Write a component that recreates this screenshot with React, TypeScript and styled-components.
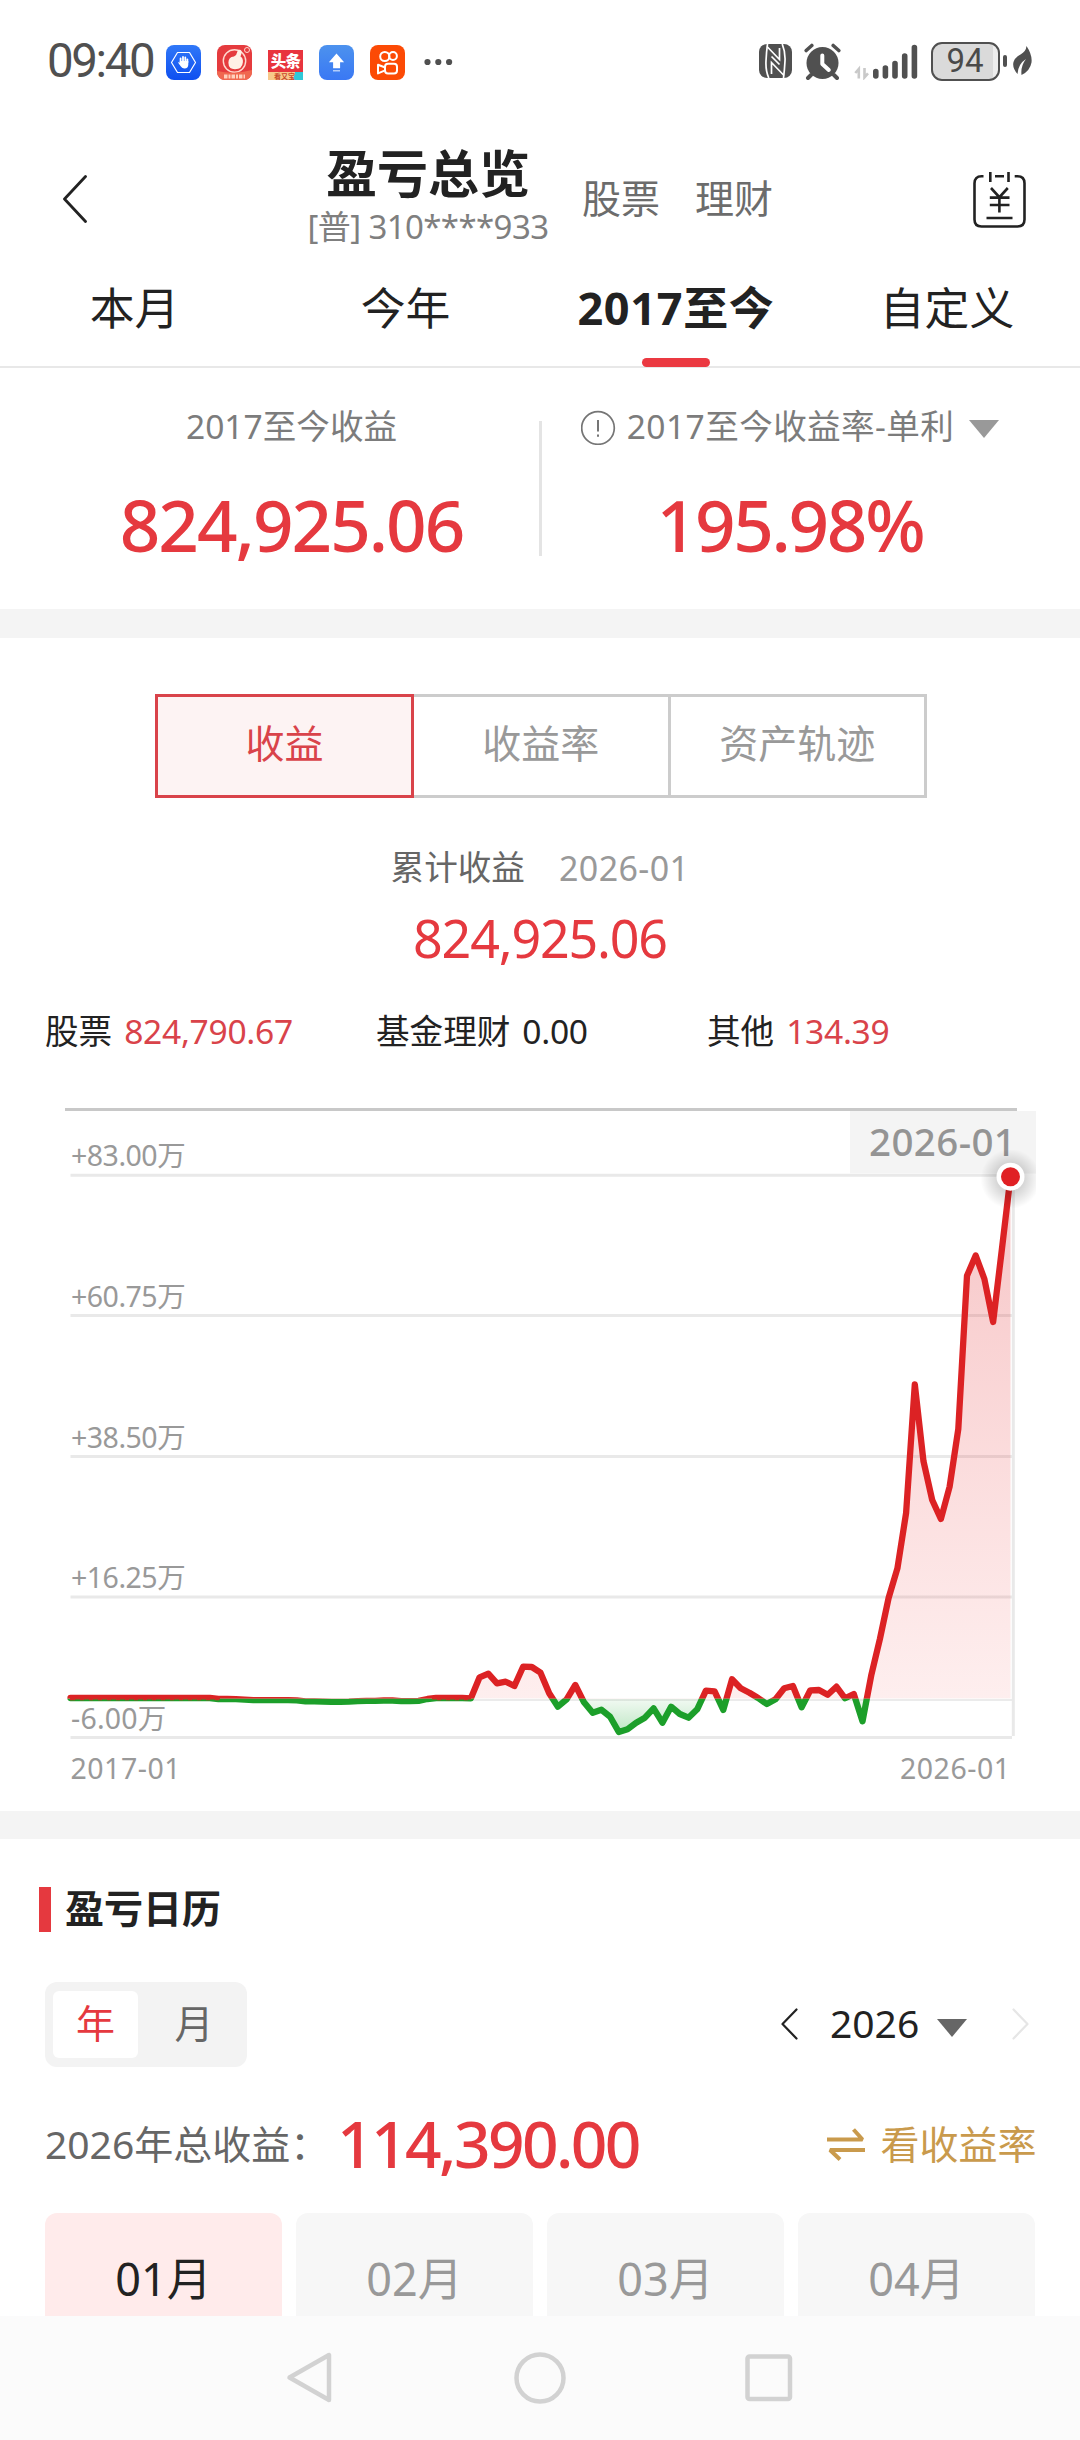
import React from "react";
import styled, { createGlobalStyle } from "styled-components";

const RED = "#e5393f";
const GREY = "#999999";

const Global = createGlobalStyle`
  * { box-sizing: border-box; }
  body { margin: 0; background: #ffffff; }
`;

const Screen = styled.div`
  width: 1080px;
  height: 2440px;
  display: flex;
  flex-direction: column;
  overflow: hidden;
  background: #ffffff;
  color: #222222;
  font-family: "Noto Sans", "Noto Sans CJK SC", sans-serif;
  svg { display: block; flex: none; }
`;

const Label = styled.span<{
  $size?: number;
  $color?: string;
  $weight?: number;
  $track?: number;
}>`
  font-size: ${(p) => p.$size ?? 33.6}px;
  line-height: 1.3;
  color: ${(p) => p.$color ?? "#222222"};
  font-weight: ${(p) => p.$weight ?? 400};
  letter-spacing: ${(p) => p.$track ?? 0}px;
  white-space: nowrap;
`;

/* ---------- status bar ---------- */

const StatusBar = styled.header`
  height: 122px;
  flex: none;
  display: flex;
  align-items: center;
  justify-content: space-between;
  padding: 0 48px 0 47px;
`;

const StatusGroup = styled.div`
  display: flex;
  align-items: center;
`;

const Clock = styled.span`
  width: 119px;
  font-family: Roboto, sans-serif;
  font-size: 47.5px;
  line-height: 56px;
  letter-spacing: -2.4px;
  color: #505050;
`;

const AppIcons = styled.div`
  display: flex;
  gap: 16px;
  padding-top: 2px;
`;

const MoreApps = styled.div`
  padding: 2px 0 0 19px;
`;

const Tile = styled.div<{ $bg: string }>`
  width: 35px;
  height: 35px;
  border-radius: 8px;
  background: ${(p) => p.$bg};
  overflow: hidden;
`;

const NewsTile = styled.div`
  width: 35px;
  height: 30px;
  margin-top: 5px;
  display: flex;
  flex-direction: column;
  overflow: hidden;
  background: #e8343e;
`;

const NewsName = styled.span`
  height: 22px;
  font-family: "Noto Sans CJK SC", sans-serif;
  font-size: 15.5px;
  line-height: 21px;
  font-weight: 900;
  letter-spacing: -0.8px;
  text-align: center;
  color: #ffffff;
`;

const NewsStrip = styled.span`
  height: 8px;
  font-family: "Noto Sans CJK SC", sans-serif;
  font-size: 7px;
  line-height: 8px;
  font-weight: 700;
  padding-left: 6px;
  color: #c8482c;
  background: linear-gradient(110deg, #f8c88a 0 72%, #2fc8d8 73%);
`;

const AlarmSlot = styled.div`
  padding: 0 13px 0 12px;
`;

const Battery = styled.div`
  width: 69px;
  height: 39px;
  margin-left: 13px;
  border: 2.5px solid #505050;
  border-radius: 11px;
  background: linear-gradient(90deg, #dadada 0 92%, #ededed 92%);
  display: flex;
  align-items: center;
  justify-content: center;
`;

const BatteryText = styled.span`
  font-family: Roboto, sans-serif;
  font-size: 33px;
  line-height: 34px;
  color: #4a4a4a;
`;

const BatteryTip = styled.div`
  width: 4px;
  height: 12px;
  margin: 0 6px 0 3.5px;
  border-radius: 2px;
  background: #505050;
`;

/* ---------- title bar and tabs ---------- */

const TitleBar = styled.div`
  height: 145px;
  flex: none;
  display: grid;
  grid-template-columns: 308px 240px 1fr 52px;
  padding: 0 55px 0 0;
`;

const BackButton = styled.div`
  padding: 53px 0 0 63px;
`;

const TitleStack = styled.div`
  display: flex;
  flex-direction: column;
  align-items: center;
  padding-top: 18px;
`;

const TitleText = styled.h1`
  margin: 0;
  font-size: 51px;
  line-height: 67px;
  font-weight: 700;
  color: #222222;
`;

const Account = styled.span`
  font-size: 33px;
  line-height: 40px;
  letter-spacing: -0.6px;
  color: #7f7f7f;
  white-space: nowrap;
`;

const TitleLinks = styled.nav`
  display: flex;
  gap: 35px;
  padding: 51px 0 0 34px;
`;

const CalendarButton = styled.div`
  padding-top: 49px;
`;

const Tabs = styled.nav`
  height: 101px;
  flex: none;
  display: grid;
  grid-template-columns: 269px 273px 268px 274px;
  border-bottom: 2px solid #e8e8e8;
`;

const Tab = styled.div`
  display: flex;
  flex-direction: column;
  align-items: center;
  justify-content: space-between;
  padding-top: 12px;
  height: 100px;
`;

const TabMark = styled.i`
  width: 68px;
  height: 9px;
  border-radius: 5px;
  background: #eb3941;
`;

/* ---------- summary ---------- */

const Summary = styled.section`
  height: 241px;
  flex: none;
  display: grid;
  grid-template-columns: 539px 3px 1fr;
  padding-top: 3px;
`;

const SummaryCell = styled.div<{ $left?: number; $right?: number }>`
  display: flex;
  flex-direction: column;
  align-items: center;
  padding: 34px ${(p) => p.$right ?? 0}px 0 ${(p) => p.$left ?? 0}px;
`;

const SummaryHead = styled.div`
  height: 44px;
  display: flex;
  align-items: center;
`;

const SummaryValue = styled(Label)`
  margin-top: 30px;
  line-height: 92px;
`;

const Divider = styled.div`
  height: 135px;
  margin-top: 50px;
  background: #e4e4e4;
`;

const Band = styled.div<{ $h: number }>`
  height: ${(p) => p.$h}px;
  flex: none;
  background: #f4f4f4;
`;

const Caret = styled.i<{ $color: string }>`
  display: block;
  width: 0;
  height: 0;
  border-left: 15.5px solid transparent;
  border-right: 15.5px solid transparent;
  border-top: 18.5px solid ${(p) => p.$color};
`;

const RateCaret = styled(Caret)`
  margin: 4px 0 0 15px;
`;

/* ---------- profit chart ---------- */

const ChartSection = styled.section`
  height: 1173px;
  flex: none;
  display: flex;
  flex-direction: column;
`;

const Segments = styled.div`
  display: flex;
  margin: 56px 0 0 155px;
  width: 772px;
`;

const Segment = styled.div<{ $active?: boolean }>`
  flex: ${(p) => (p.$active ? "0 0 259px" : "1 1 0")};
  height: 104px;
  display: flex;
  align-items: center;
  justify-content: center;
  padding-bottom: 5px;
  border: 3px solid ${(p) => (p.$active ? "#d9434a" : "#cccccc")};
  border-left-width: ${(p) => (p.$active ? 3 : 0)}px;
  background: ${(p) => (p.$active ? "#fdf3f3" : "#ffffff")};
`;

const Caption = styled.div`
  display: flex;
  justify-content: center;
  gap: 34px;
  height: 44px;
  margin-top: 48px;
`;

const Total = styled(Label)`
  align-self: center;
  line-height: 70px;
  margin-top: 13px;
`;

const Breakdown = styled.div`
  display: grid;
  grid-template-columns: 331px 331px 1fr;
  padding-left: 45px;
  margin-top: 37px;
  height: 44px;
`;

const BreakdownItem = styled.div`
  display: flex;
  gap: 12px;
`;

const ChartBox = styled.div`
  margin-top: 46px;
`;

/* ---------- calendar ---------- */

const CalendarSection = styled.section`
  height: 477px;
  flex: none;
  overflow: hidden;
  padding: 0 45px;
`;

const SectionTitle = styled.div`
  display: flex;
  align-items: flex-start;
  gap: 14px;
  margin: 48px 0 0 -6px;
  height: 46px;
`;

const SectionName = styled(Label)`
  line-height: 42px;
`;

const TitleTick = styled.i`
  width: 12px;
  height: 45px;
  background: ${RED};
`;

const PeriodRow = styled.div`
  display: flex;
  align-items: center;
  justify-content: space-between;
  margin-top: 49px;
  height: 85px;
`;

const Toggle = styled.div`
  width: 202px;
  height: 85px;
  padding: 9px 0 9px 8px;
  display: flex;
  border-radius: 12px;
  background: #f3f3f3;
`;

const ToggleItem = styled.div<{ $active?: boolean }>`
  flex: 0 0 ${(p) => (p.$active ? 85 : 112)}px;
  height: 67px;
  display: flex;
  align-items: center;
  justify-content: center;
  padding-bottom: 3px;
  border-radius: 6px;
  background: ${(p) => (p.$active ? "#ffffff" : "transparent")};
`;

const YearPicker = styled.div`
  display: flex;
  align-items: center;
  padding: 0 6px 2px 0;
`;

const YearLabel = styled(Label)`
  width: 89px;
  margin: 0 18px 0 32px;
`;

const YearCaret = styled(Caret)`
  margin: 9px 45px 0 0;
`;

const TotalRow = styled.div`
  display: flex;
  align-items: center;
  height: 90px;
  margin-top: 32px;
`;

const TotalLabel = styled(Label)`
  width: 292px;
`;

const RateLink = styled.div`
  margin: 0 -1.5px 0 auto;
  display: flex;
  align-items: center;
  gap: 15px;
`;

const Months = styled.div`
  display: grid;
  grid-template-columns: repeat(4, 237px);
  gap: 14px;
  margin-top: 24px;
`;

const Month = styled.div<{ $active?: boolean }>`
  height: 180px;
  padding-top: 37px;
  text-align: center;
  border-radius: 12px;
  background: ${(p) => (p.$active ? "#ffebeb" : "#f7f7f7")};
`;

const NavBar = styled.footer`
  height: 124px;
  flex: none;
  display: flex;
  justify-content: center;
  gap: 177px;
  padding-top: 34px;
  background: #fbfbfb;
`;

/* ---------- icons ---------- */

const HandIcon = () => (
  <svg width="35" height="35" viewBox="0 0 35 35" fill="none" stroke="#fff">
    <path d="M11.500 7.500h12l6 10-6 10h-12l-6-10z" strokeWidth="1.200" strokeLinejoin="round" />
    <path d="M14.600 17v-3.600M17 16.500v-4.600M19.300 16.500v-4M21.400 17.500v-3" strokeWidth="1.800" strokeLinecap="round" />
    <path d="M13.800 16h8.500v3.500q0 4-3.800 4-2.300 0-3.600-2.100l-2.900-3.900q1-.7 1.800.2z" fill="#fff" stroke="none" />
  </svg>
);

const FruitIcon = () => (
  <svg width="35" height="35" viewBox="0 0 35 35" fill="none">
    <circle cx="17.500" cy="16" r="11.200" stroke="#ffd9cf" strokeWidth="1.400" />
    <path d="M17 11.500q2.600-1 3.200-4.600.3-2.400 2.800-2.100 2.300.7 1.500 3.600l-1 3q2.800 1.800 2.400 5.800-.6 7-7.900 7-6.500 0-6.600-6.500 0-5.800 5.600-6.200z" fill="#fff0e6" />
    <circle cx="30" cy="5" r="2.500" stroke="#ffd9cf" />
    <path d="M0 26q17 4 35-1v10H0z" fill="#f0674f" />
    <path d="M7 31.500h21" stroke="#ffd0bd" strokeWidth="4" strokeDasharray="3.500 1 2 1" />
  </svg>
);

const UpIcon = () => (
  <svg width="35" height="35" viewBox="0 0 35 35" fill="#fff">
    <path d="M17.500 8.500l7.600 8.800h-4v6h-7v-6h-4.200z" />
    <path d="M14 25h7v1.500h-7z" opacity=".6" />
  </svg>
);

const VideoIcon = () => (
  <svg width="35" height="35" viewBox="0 0 35 35" fill="none" stroke="#fff" strokeWidth="2">
    <circle cx="14.800" cy="11.500" r="4.600" />
    <circle cx="23" cy="11" r="3.900" />
    <rect x="15" y="18.800" width="12" height="9.800" rx="3" />
    <path d="M14.500 22.200L8 19.800v8.600l6.500-2.800" strokeLinejoin="round" />
  </svg>
);

const Dots = () => (
  <svg width="29" height="8" viewBox="0 0 29 8" fill="#505050">
    <circle cx="3.500" cy="4" r="3.100" />
    <circle cx="14.300" cy="4" r="3.100" />
    <circle cx="25.100" cy="4" r="3.100" />
  </svg>
);

const NfcIcon = () => (
  <svg width="33" height="34" viewBox="0 0 33 34">
    <rect width="33" height="34" rx="8" fill="#505050" />
    <g fill="none" stroke="#fff" strokeWidth="1.700">
      <path d="M9.800 34Q6.500 27 7 17T8.500 0" />
      <path d="M23.200 0Q26.500 8 26 17T24.500 34" />
      <path d="M8 2.500L20.500 15.500V4" />
      <path d="M12.500 30V18.500L25 31.500" />
      <path d="M12.500 12.500L20.500 20.500" />
    </g>
  </svg>
);

const AlarmIcon = () => (
  <svg width="37" height="37" viewBox="0 0 37 37" fill="none" strokeLinecap="round">
    <circle cx="18.500" cy="20" r="16" fill="#505050" />
    <path d="M2.200 7.500L7.800 2.500M34.800 7.500L29.200 2.500" stroke="#505050" strokeWidth="3.600" />
    <path d="M7 32l-3 3M30 32l3 3" stroke="#505050" strokeWidth="4" />
    <path d="M18.300 12.500v8.500l6.500 6" stroke="#fff" strokeWidth="4" strokeLinejoin="round" />
  </svg>
);

const SignalIcon = () => (
  <svg width="64" height="37" viewBox="0 0 64 37" strokeLinecap="round">
    <path d="M4.800 35.500v-9.500l-3.500 4M10.500 25v9.300l3.500-4" fill="none" stroke="#c9c9c9" strokeWidth="2.600" strokeLinecap="butt" />
    <path d="M21.800 28.500v4.500M31.400 25v8M41 20.500V33M50.700 13v20M60.400 4.500V33" stroke="#505050" strokeWidth="5.600" />
  </svg>
);

const LeafIcon = () => (
  <svg width="19" height="31" viewBox="0 0 19 31">
    <path d="M13.500 0q6 9 5 16.500Q17 25 8.500 29q-1-9 4.500-16Q5 18 4.500 28-1 22 .5 16 2 11 7.500 8.500 13 5.500 13.500 0z" fill="#505050" />
  </svg>
);

const Chevron = ({ w, h, color, sw, flip }: { w: number; h: number; color: string; sw: number; flip?: boolean }) => (
  <svg width={w} height={h} viewBox={`0 0 ${w} ${h}`} fill="none">
    <path
      d={flip ? `M1.500 1.500L${w - 1.5} ${h / 2}L1.500 ${h - 1.5}` : `M${w - 1.5} 1.500L1.500 ${h / 2}L${w - 1.5} ${h - 1.5}`}
      stroke={color}
      strokeWidth={sw}
      strokeLinecap="round"
      strokeLinejoin="round"
    />
  </svg>
);

const YuanCalendarIcon = () => (
  <svg width="53" height="58" viewBox="0 0 53 58" fill="none" stroke="#222" strokeWidth="2.600">
    <path d="M10.500 5.300H8.500q-7 0-7 7V48.500q0 7 7 7h36q7 0 7-7V12.300q0-7-7-7h-2.800" />
    <path d="M17.300 1v10M35.500 1v10M22 5.300h9" />
    <path d="M18 17l8.400 9.200L34.800 17M26.400 26v15.500M16.800 26.600h19.700M16.800 34h19.700M13.500 47h26" />
  </svg>
);

const InfoIcon = () => (
  <svg width="46" height="36" viewBox="0 0 46 36" fill="none" stroke="#757575" strokeWidth="1.700">
    <circle cx="17" cy="19" r="16.300" />
    <path d="M17 11v11.500M17 25.500v2.200" strokeWidth="2" />
  </svg>
);

const SwapIcon = () => (
  <svg width="38" height="34" viewBox="0 0 38 34" fill="none" stroke="#c99a4c" strokeWidth="4">
    <path d="M0 12.500h35.500L26.500 2.500M38 23H3l10 9.500" strokeLinejoin="bevel" />
  </svg>
);

/* ---------- chart ---------- */

// Vertical position of the cumulative profit for each month since 2017-01.
const series: number[] = [
  ...Array(17).fill(1698), 1699, 1699, 1699.2, 1699.6, 1700.1, 1700.1, 1700.1, 1700.1, 1700.1, 1700.4, 1701.3, 1701.4,
  1701.6, 1701.8, 1701.8, 1701.6, 1701.1, 1700.9, 1700.8, 1700.5, 1700.5, 1701.2, 1701.2, 1700.8, 1699, 1698, 1698,
  1698, 1698, 1698.3, 1677.3, 1673.7, 1683.3, 1681.7, 1686, 1666.7, 1667, 1672.7, 1693.3, 1706.7, 1699.3, 1685,
  1702.3, 1712.7, 1709.7, 1716.7, 1732, 1729.3, 1722.7, 1717.7, 1708.3, 1722.7, 1706.7, 1714, 1717.7, 1709.3, 1690.7,
  1691.3, 1710, 1679.3, 1688.3, 1692.7, 1698, 1704, 1699.3, 1688.3, 1686, 1707.3, 1690.3, 1690, 1694.7, 1686.7,
  1698.3, 1694, 1721.3, 1675.6, 1639, 1598, 1568.4, 1513, 1384.4, 1461.3, 1500, 1519, 1486.8, 1429, 1275.8, 1255.5,
  1279, 1322, 1250, 1176.7,
];

const ZERO = 1698.6;
const X0 = 70.5;
const STEP = 940 / (series.length - 1);
const line = series.map((y, i) => `${i ? "L" : "M"}${(X0 + STEP * i).toFixed(1)} ${y}`).join("");
const area = `${line}L1010.500 ${ZERO}L${X0} ${ZERO}Z`;

const axis = [
  { y: 1175.3, base: 1166, text: "+83.00万" },
  { y: 1315.5, base: 1307.3, text: "+60.75万" },
  { y: 1456.5, base: 1448, text: "+38.50万" },
  { y: 1597, base: 1588.3, text: "+16.25万" },
  { y: 1737.4, base: 1729, text: "-6.00万" },
];

const AxisText = styled.text<{ $track: number }>`
  font-family: "Noto Sans", "Noto Sans CJK SC", sans-serif;
  font-size: 28.5px;
  letter-spacing: ${(p) => p.$track}px;
  fill: ${GREY};
`;

const FlagText = styled.text`
  font-family: "Noto Sans", "Noto Sans CJK SC", sans-serif;
  font-size: 38.5px;
  font-weight: 500;
  letter-spacing: 0.4px;
  fill: #949494;
`;

const ProfitChart = () => (
  <svg width="1080" height="700" viewBox="0 1100 1080 700" fill="none">
    <defs>
      <clipPath id="gain"><rect x="0" y="1100" width="1080" height={1698.8 - 1100} /></clipPath>
      <clipPath id="loss"><rect x="0" y="1698.8" width="1080" height="60" /></clipPath>
      <clipPath id="halo"><rect x="980" y="1150" width="56" height="60" /></clipPath>
      <linearGradient id="gainFill" x1="0" y1="1176" x2="0" y2="1699" gradientUnits="userSpaceOnUse">
        <stop offset="0" stopColor="#dc1f24" stopOpacity=".26" />
        <stop offset="1" stopColor="#f03030" stopOpacity=".08" />
      </linearGradient>
      <linearGradient id="lossFill" x1="0" y1="1699" x2="0" y2="1732" gradientUnits="userSpaceOnUse">
        <stop offset="0" stopColor="#1ca82e" stopOpacity=".06" />
        <stop offset="1" stopColor="#1ca82e" stopOpacity=".28" />
      </linearGradient>
      <radialGradient id="haloFill">
        <stop offset=".45" stopColor="#000" stopOpacity=".16" />
        <stop offset="1" stopColor="#000" stopOpacity="0" />
      </radialGradient>
    </defs>
    <path d="M65 1109.500H1017" stroke="#c8c8c8" strokeWidth="3" />
    {axis.map((a) => (
      <path key={a.text} d={`M70.500 ${a.y}H1012`} stroke="#e9e9e9" strokeWidth="3" />
    ))}
    <path d="M70.500 1700H1012" stroke="#ebebeb" strokeWidth="2" />
    <path d="M1013.300 1176V1736" stroke="#e9e9e9" strokeWidth="3" />
    <rect x="850" y="1111" width="186" height="62.500" fill="#f4f4f4" />
    <path d={area} fill="url(#gainFill)" clipPath="url(#gain)" />
    <path d={area} fill="url(#lossFill)" clipPath="url(#loss)" />
    <g strokeWidth="6.300" strokeLinejoin="round" strokeLinecap="round">
      <path d={line} stroke="#dc2224" clipPath="url(#gain)" />
      <path d={line} stroke="#1c9f2a" clipPath="url(#loss)" />
    </g>
    <path d="M70 1699.200H220M432 1699.200H471" stroke="#d02a24" strokeWidth="2.200" />
    <path d="M75 1700.300H220M432 1700.300H471" stroke="#1c9f2a" strokeWidth="1.600" strokeDasharray="5 4" />
    {axis.map((a) => (
      <AxisText key={a.text} x="71" y={a.base} $track={a.text.startsWith("+") ? -0.5 : 0.2}>{a.text}</AxisText>
    ))}
    <AxisText x="70.500" y="1779" $track={0.5}>2017-01</AxisText>
    <AxisText x="1010.500" y="1779" textAnchor="end" $track={0.5}>2026-01</AxisText>
    <FlagText x="869" y="1156">2026-01</FlagText>
    <circle cx="1010.500" cy="1179" r="30" fill="url(#haloFill)" clipPath="url(#halo)" />
    <circle cx="1010.500" cy="1176.700" r="14" fill="#fff" />
    <circle cx="1010.500" cy="1176.700" r="9.500" fill="#e02024" />
  </svg>
);

export default function App() {
  return (
    <Screen>
      <Global />
      <StatusBar>
        <StatusGroup>
          <Clock>09:40</Clock>
          <AppIcons>
            <Tile $bg="linear-gradient(#3078f8, #0f4ff0)"><HandIcon /></Tile>
            <Tile $bg="#e53b3e"><FruitIcon /></Tile>
            <NewsTile>
              <NewsName>头条</NewsName>
              <NewsStrip>看又宝</NewsStrip>
            </NewsTile>
            <Tile $bg="linear-gradient(#4c92ee, #3a78f4)"><UpIcon /></Tile>
            <Tile $bg="#fc4a05"><VideoIcon /></Tile>
          </AppIcons>
          <MoreApps><Dots /></MoreApps>
        </StatusGroup>
        <StatusGroup>
          <NfcIcon />
          <AlarmSlot><AlarmIcon /></AlarmSlot>
          <SignalIcon />
          <Battery><BatteryText>94</BatteryText></Battery>
          <BatteryTip />
          <LeafIcon />
        </StatusGroup>
      </StatusBar>

      <TitleBar>
        <BackButton><Chevron w={24} h={48} color="#222222" sw={2.8} /></BackButton>
        <TitleStack>
          <TitleText>盈亏总览</TitleText>
          <Account>[普] 310****933</Account>
        </TitleStack>
        <TitleLinks>
          <Label $size={39} $color="#6c6c6c">股票</Label>
          <Label $size={39} $color="#6c6c6c">理财</Label>
        </TitleLinks>
        <CalendarButton><YuanCalendarIcon /></CalendarButton>
      </TitleBar>

      <Tabs>
        <Tab><Label $size={44.8}>本月</Label></Tab>
        <Tab><Label $size={44.8}>今年</Label></Tab>
        <Tab><Label $size={45} $weight={700} $track={0.7}>2017至今</Label><TabMark /></Tab>
        <Tab><Label $size={44.8}>自定义</Label></Tab>
      </Tabs>

      <Summary>
        <SummaryCell $left={44}>
          <SummaryHead><Label $color="#7c7c7c">2017至今收益</Label></SummaryHead>
          <SummaryValue $size={71} $color={RED} $weight={500} $track={-2}>824,925.06</SummaryValue>
        </SummaryCell>
        <Divider />
        <SummaryCell $right={42}>
          <SummaryHead>
            <InfoIcon />
            <Label $color="#7c7c7c" $track={0.4}>2017至今收益率-单利</Label>
            <RateCaret $color={GREY} />
          </SummaryHead>
          <SummaryValue $size={71} $color={RED} $weight={500} $track={-2.3}>195.98%</SummaryValue>
        </SummaryCell>
      </Summary>
      <Band $h={29} />

      <ChartSection>
        <Segments>
          <Segment $active><Label $size={39} $color="#d9434a">收益</Label></Segment>
          <Segment><Label $size={39} $color={GREY}>收益率</Label></Segment>
          <Segment><Label $size={39} $color={GREY}>资产轨迹</Label></Segment>
        </Segments>
        <Caption>
          <Label $color="#666666">累计收益</Label>
          <Label $size={34} $color={GREY} $track={0.4}>2026-01</Label>
        </Caption>
        <Total $size={52} $color={RED} $track={-1.2}>824,925.06</Total>
        <Breakdown>
          <BreakdownItem><Label>股票</Label><Label $color="#d9434a" $track={-0.3}>824,790.67</Label></BreakdownItem>
          <BreakdownItem><Label>基金理财</Label><Label $track={-0.3}>0.00</Label></BreakdownItem>
          <BreakdownItem><Label>其他</Label><Label $color="#d9434a" $track={-0.3}>134.39</Label></BreakdownItem>
        </Breakdown>
        <ChartBox><ProfitChart /></ChartBox>
      </ChartSection>
      <Band $h={28} />

      <CalendarSection>
        <SectionTitle>
          <TitleTick />
          <SectionName $size={39} $weight={700}>盈亏日历</SectionName>
        </SectionTitle>
        <PeriodRow>
          <Toggle>
            <ToggleItem $active><Label $size={39} $color={RED}>年</Label></ToggleItem>
            <ToggleItem><Label $size={39} $color="#666666">月</Label></ToggleItem>
          </Toggle>
          <YearPicker>
            <Chevron w={17} h={32} color="#222222" sw={2.2} />
            <YearLabel $size={39}>2026</YearLabel>
            <YearCaret $color="#666666" />
            <Chevron w={17} h={32} color="#e6e6e6" sw={2.2} flip />
          </YearPicker>
        </PeriodRow>
        <TotalRow>
          <TotalLabel $size={39} $color="#666666">2026年总收益：</TotalLabel>
          <Label $size={64} $color={RED} $weight={500} $track={-2.6}>114,390.00</Label>
          <RateLink>
            <SwapIcon />
            <Label $size={39} $color="#c99a4c">看收益率</Label>
          </RateLink>
        </TotalRow>
        <Months>
          <Month $active><Label $size={45}>01月</Label></Month>
          <Month><Label $size={45} $color={GREY}>02月</Label></Month>
          <Month><Label $size={45} $color={GREY}>03月</Label></Month>
          <Month><Label $size={45} $color={GREY}>04月</Label></Month>
        </Months>
      </CalendarSection>

      <NavBar>
        <svg width="52" height="56" viewBox="0 0 52 56" fill="none" stroke="#d2d2d2" strokeWidth="4.500" strokeLinejoin="round">
          <path d="M47.500 5v45L8 27.500z" transform="translate(-1.500 0)" />
        </svg>
        <svg width="56" height="56" viewBox="0 0 56 56" fill="none" stroke="#d2d2d2" strokeWidth="4.500">
          <circle cx="28" cy="28" r="23.500" />
        </svg>
        <svg width="52" height="56" viewBox="0 0 52 56" fill="none" stroke="#d2d2d2" strokeWidth="4.500">
          <rect x="2.500" y="6.500" width="42.500" height="42.500" rx="2" />
        </svg>
      </NavBar>
    </Screen>
  );
}
